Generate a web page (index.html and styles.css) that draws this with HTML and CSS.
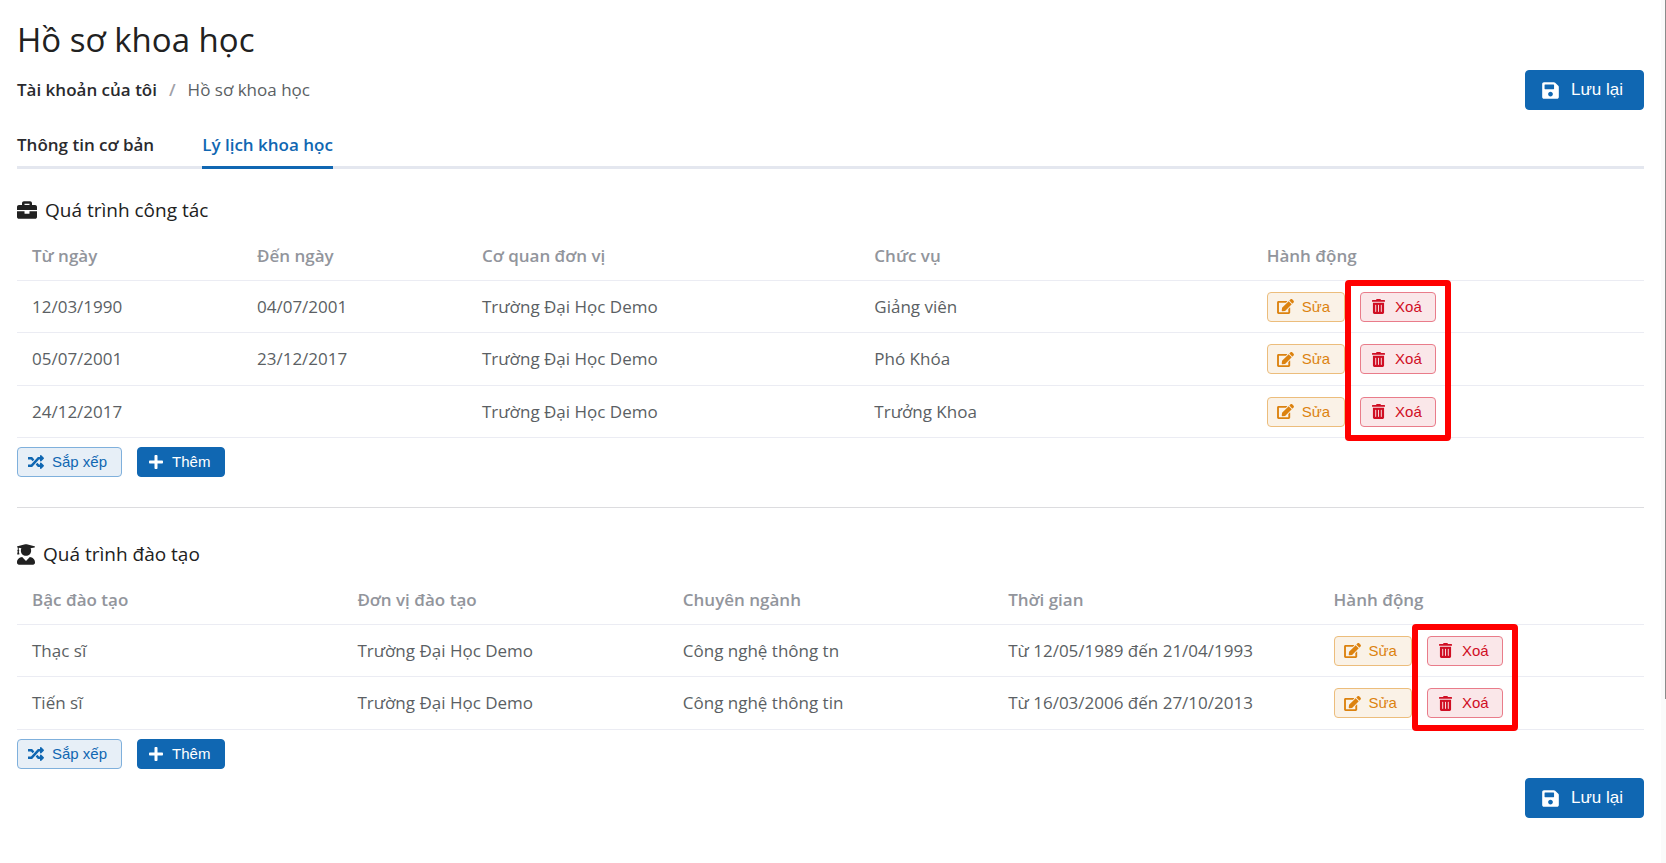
FILE: index.html
```html
<!DOCTYPE html>
<html lang="vi">
<head>
  <meta charset="UTF-8">
  <meta name="viewport" content="width=device-width, initial-scale=1">
  <title>Hồ sơ khoa học</title>
  <link rel="stylesheet" href="styles.css">
</head>
<body>

  <svg class="sprite" aria-hidden="true">
    <symbol id="i-save" viewBox="0 0 448 512"><path d="M433.941 129.941l-83.882-83.882A48 48 0 0 0 316.118 32H48C21.49 32 0 53.49 0 80v352c0 26.51 21.49 48 48 48h352c26.51 0 48-21.49 48-48V163.882a48 48 0 0 0-14.059-33.941zM224 416c-35.346 0-64-28.654-64-64 0-35.346 28.654-64 64-64s64 28.654 64 64c0 35.346-28.654 64-64 64zm96-304.52V212c0 6.627-5.373 12-12 12H76c-6.627 0-12-5.373-12-12V108c0-6.627 5.373-12 12-12h228.52c3.183 0 6.235 1.264 8.485 3.515l3.48 3.48A11.996 11.996 0 0 1 320 111.48z"/></symbol>
    <symbol id="i-edit" viewBox="0 0 576 512"><path d="M402.6 83.2l90.2 90.2c3.8 3.8 3.8 10 0 13.8L274.4 405.6l-92.8 10.3c-12.4 1.4-22.9-9.1-21.5-21.5l10.3-92.8L388.8 83.2c3.8-3.8 10-3.8 13.8 0zm162-22.9l-48.8-48.8c-15.2-15.2-39.9-15.2-55.2 0l-35.4 35.4c-3.8 3.8-3.8 10 0 13.8l90.2 90.2c3.8 3.8 10 3.8 13.8 0l35.4-35.4c15.2-15.3 15.2-40 0-55.2zM384 346.2V448H64V128h229.8c3.2 0 6.2-1.3 8.5-3.5l40-40c7.6-7.6 2.2-20.5-8.5-20.5H48C21.5 64 0 85.5 0 112v352c0 26.5 21.5 48 48 48h352c26.5 0 48-21.5 48-48V306.2c0-10.7-12.9-16-20.5-8.5l-40 40c-2.2 2.3-3.5 5.3-3.5 8.5z"/></symbol>
    <symbol id="i-trash" viewBox="0 0 448 512"><path d="M32 464a48 48 0 0 0 48 48h288a48 48 0 0 0 48-48V128H32zm272-256a16 16 0 0 1 32 0v224a16 16 0 0 1-32 0zm-96 0a16 16 0 0 1 32 0v224a16 16 0 0 1-32 0zm-96 0a16 16 0 0 1 32 0v224a16 16 0 0 1-32 0zM432 32H312l-9.4-18.7A24 24 0 0 0 281.1 0H166.8a23.72 23.72 0 0 0-21.4 13.3L136 32H16A16 16 0 0 0 0 48v32a16 16 0 0 0 16 16h416a16 16 0 0 0 16-16V48a16 16 0 0 0-16-16z"/></symbol>
    <symbol id="i-plus" viewBox="0 0 448 512"><path d="M416 208H272V64c0-17.67-14.33-32-32-32h-32c-17.67 0-32 14.33-32 32v144H32c-17.67 0-32 14.33-32 32v32c0 17.67 14.33 32 32 32h144v144c0 17.67 14.33 32 32 32h32c17.67 0 32-14.33 32-32V304h144c17.67 0 32-14.33 32-32v-32c0-17.67-14.33-32-32-32z"/></symbol>
    <symbol id="i-random" viewBox="0 0 512 512"><path d="M504.971 359.029c9.373 9.373 9.373 24.569 0 33.941l-80 79.984c-15.01 15.01-40.971 4.49-40.971-16.971V416h-58.785a12.004 12.004 0 0 1-8.773-3.812l-70.556-75.596 53.333-57.143L352 336h32v-39.981c0-21.438 25.943-31.998 40.971-16.971l80 79.981zM12 176h84l52.781 56.551 53.333-57.143-70.556-75.596A11.999 11.999 0 0 0 122.785 96H12c-6.627 0-12 5.373-12 12v56c0 6.627 5.373 12 12 12zm372 0v39.984c0 21.46 25.961 31.98 40.971 16.971l80-79.984c9.373-9.373 9.373-24.569 0-33.941l-80-79.981C409.943 24.021 384 34.582 384 56.019V96h-58.785a12.004 12.004 0 0 0-8.773 3.812L96 336H12c-6.627 0-12 5.373-12 12v56c0 6.627 5.373 12 12 12h110.785c3.326 0 6.503-1.381 8.773-3.812L352 176h32z"/></symbol>
    <symbol id="i-briefcase" viewBox="0 0 512 512"><path d="M320 336c0 8.84-7.16 16-16 16h-96c-8.84 0-16-7.16-16-16v-48H0v144c0 25.6 22.4 48 48 48h416c25.6 0 48-22.4 48-48V288H320v48zm144-208h-80V80c0-25.6-22.4-48-48-48H176c-25.6 0-48 22.4-48 48v48H48c-25.6 0-48 22.4-48 48v80h512v-80c0-25.6-22.4-48-48-48zm-144 0H192V96h128v32z"/></symbol>
    <symbol id="i-graduate" viewBox="0 0 448 512"><path d="M319.4 320.6L224 416l-95.4-95.4C57.1 323.7 0 382.2 0 454.4v9.6c0 26.5 21.5 48 48 48h352c26.5 0 48-21.5 48-48v-9.6c0-72.2-57.1-130.7-128.6-133.8zM13.6 79.8l6.4 1.5v58.4c-7 4.2-12 11.5-12 20.3 0 8.4 4.6 15.4 11.1 19.7L3.5 242c-1.7 6.9 2.1 14 7.6 14h41.8c5.5 0 9.3-7.1 7.6-14l-15.6-62.3C51.4 175.4 56 168.4 56 160c0-8.8-5-16.1-12-20.3V87.1l66 15.9c-8.6 17.2-14 36.4-14 57 0 70.7 57.3 128 128 128s128-57.3 128-128c0-20.6-5.3-39.8-14-57l96.3-23.2c18.2-4.4 18.2-27.1 0-31.5l-190.4-46c-13-3.1-26.7-3.1-39.7 0L13.6 48.2c-18.1 4.4-18.1 27.2 0 31.6z"/></symbol>
  </svg>

  <main class="page">
    <h1>Hồ sơ khoa học</h1>

    <div class="topbar">
      <nav class="breadcrumb">
        <a href="#">Tài khoản của tôi</a>
        <span class="sep">/</span>
        <span>Hồ sơ khoa học</span>
      </nav>
      <button type="button" class="btn btn-save"><svg class="icon-save"><use href="#i-save"/></svg>Lưu lại</button>
    </div>

    <nav class="tabs">
      <a href="#">Thông tin cơ bản</a>
      <a href="#" class="active">Lý lịch khoa học</a>
    </nav>

    <section>
      <h2><svg class="icon-briefcase"><use href="#i-briefcase"/></svg>Quá trình công tác</h2>
      <table class="work">
        <thead>
          <tr><th class="date">Từ ngày</th><th class="date">Đến ngày</th><th>Cơ quan đơn vị</th><th>Chức vụ</th><th>Hành động</th></tr>
        </thead>
        <tbody>
          <tr>
            <td>12/03/1990</td><td>04/07/2001</td><td>Trường Đại Học Demo</td><td>Giảng viên</td>
            <td>
              <div class="actions">
                <button type="button" class="btn btn-edit"><svg class="icon-edit"><use href="#i-edit"/></svg>Sửa</button>
                <div class="marked">
                  <button type="button" class="btn btn-delete"><svg class="icon-trash"><use href="#i-trash"/></svg>Xoá</button>
                  <div class="mark mark-3"></div>
                </div>
              </div>
            </td>
          </tr>
          <tr>
            <td>05/07/2001</td><td>23/12/2017</td><td>Trường Đại Học Demo</td><td>Phó Khóa</td>
            <td>
              <div class="actions">
                <button type="button" class="btn btn-edit"><svg class="icon-edit"><use href="#i-edit"/></svg>Sửa</button>
                <button type="button" class="btn btn-delete"><svg class="icon-trash"><use href="#i-trash"/></svg>Xoá</button>
              </div>
            </td>
          </tr>
          <tr>
            <td>24/12/2017</td><td></td><td>Trường Đại Học Demo</td><td>Trưởng Khoa</td>
            <td>
              <div class="actions">
                <button type="button" class="btn btn-edit"><svg class="icon-edit"><use href="#i-edit"/></svg>Sửa</button>
                <button type="button" class="btn btn-delete"><svg class="icon-trash"><use href="#i-trash"/></svg>Xoá</button>
              </div>
            </td>
          </tr>
        </tbody>
      </table>
      <div class="toolbar">
        <button type="button" class="btn btn-sort"><svg class="icon-random"><use href="#i-random"/></svg>Sắp xếp</button>
        <button type="button" class="btn btn-add"><svg class="icon-plus"><use href="#i-plus"/></svg>Thêm</button>
      </div>
    </section>

    <hr>

    <section>
      <h2><svg class="icon-graduate"><use href="#i-graduate"/></svg>Quá trình đào tạo</h2>
      <table>
        <thead>
          <tr><th>Bậc đào tạo</th><th>Đơn vị đào tạo</th><th>Chuyên ngành</th><th>Thời gian</th><th>Hành động</th></tr>
        </thead>
        <tbody>
          <tr>
            <td>Thạc sĩ</td><td>Trường Đại Học Demo</td><td>Công nghệ thông tn</td><td>Từ 12/05/1989 đến 21/04/1993</td>
            <td>
              <div class="actions">
                <button type="button" class="btn btn-edit"><svg class="icon-edit"><use href="#i-edit"/></svg>Sửa</button>
                <div class="marked">
                  <button type="button" class="btn btn-delete"><svg class="icon-trash"><use href="#i-trash"/></svg>Xoá</button>
                  <div class="mark mark-2"></div>
                </div>
              </div>
            </td>
          </tr>
          <tr>
            <td>Tiến sĩ</td><td>Trường Đại Học Demo</td><td>Công nghệ thông tin</td><td>Từ 16/03/2006 đến 27/10/2013</td>
            <td>
              <div class="actions">
                <button type="button" class="btn btn-edit"><svg class="icon-edit"><use href="#i-edit"/></svg>Sửa</button>
                <button type="button" class="btn btn-delete"><svg class="icon-trash"><use href="#i-trash"/></svg>Xoá</button>
              </div>
            </td>
          </tr>
        </tbody>
      </table>
      <div class="toolbar">
        <button type="button" class="btn btn-sort"><svg class="icon-random"><use href="#i-random"/></svg>Sắp xếp</button>
        <button type="button" class="btn btn-add"><svg class="icon-plus"><use href="#i-plus"/></svg>Thêm</button>
      </div>
    </section>

    <div class="bottom">
      <button type="button" class="btn btn-save"><svg class="icon-save"><use href="#i-save"/></svg>Lưu lại</button>
    </div>
  </main>

  <div class="scrollbar"><div class="thumb"></div></div>

</body>
</html>
```
FILE: styles.css
```css
* {
  box-sizing: border-box;
}

body {
  margin: 0;
  background: #fff;
  color: #5b5f64;
  font: 17px/24px 'Segoe UI', 'Open Sans', 'Noto Sans', sans-serif;
}

.sprite {
  display: none;
}

.page {
  padding: 16px 22px 16px 17px;
}

h1 {
  margin: 0 0 6px;
  color: #212121;
  font-size: 33px;
  line-height: 48px;
  font-weight: 400;
}

.topbar {
  display: flex;
  justify-content: space-between;
  align-items: center;
}

.breadcrumb {
  display: flex;
  gap: 12px;
}

.breadcrumb a {
  color: #2a2a2e;
  font-weight: 600;
  text-decoration: none;
}

.breadcrumb .sep {
  color: #a0a0a8;
  font-weight: 600;
}

.tabs {
  display: flex;
  gap: 48px;
  margin-top: 14px;
  border-bottom: 3px solid #e4e7ef;
}

.tabs a {
  margin-bottom: -3px;
  padding: 9px 0;
  border-bottom: 3px solid transparent;
  color: #2a2a2e;
  font-weight: 600;
  text-decoration: none;
}

.tabs .active {
  color: #1067b2;
  border-color: #1067b2;
}

h2 {
  display: flex;
  align-items: center;
  gap: 8px;
  margin: 25px 0 6px;
  color: #212121;
  font-size: 19px;
  line-height: 32px;
  font-weight: 400;
}

table {
  width: 100%;
  table-layout: fixed;
  border-collapse: separate;
  border-spacing: 0;
}

th, td {
  padding: 0 15px;
  border-bottom: 1px solid #ebecf3;
  text-align: left;
}

th {
  height: 49px;
  color: #92959c;
  font-weight: 600;
}

td {
  height: 52px;
}

tr:nth-child(even) td {
  height: 53px;
}

.date {
  width: 225px;
}

.actions, .toolbar {
  display: flex;
  gap: 15px;
}

.toolbar {
  margin-top: 9px;
}

.btn {
  display: inline-flex;
  align-items: center;
  height: 30px;
  border: 1px solid;
  border-radius: 4px;
  padding: 0 14px 0 9px;
  gap: 8px;
  font: 15px/20px 'Liberation Sans', Arial, sans-serif;
  cursor: pointer;
}

.btn svg, h2 svg {
  fill: currentColor;
  flex: none;
}

.btn-edit {
  background: #faf2e7;
  border-color: #ecbd7c;
  color: #dc820f;
}

.btn-delete {
  background: #fae7e9;
  border-color: #e97c8a;
  color: #d00e24;
  padding: 0 13px 0 11px;
  gap: 10px;
}

.btn-sort {
  background: #e7eff7;
  border-color: #7fb0dc;
  color: #1067b2;
  padding-left: 10px;
}

.btn-add {
  background: #1067b2;
  border-color: #1067b2;
  color: #fff;
  padding-left: 11px;
  gap: 9px;
}

.btn-save {
  height: 40px;
  background: #1067b2;
  border-color: #1067b2;
  color: #fff;
  padding: 0 20px 0 16px;
  gap: 12px;
  font-size: 17px;
}

.icon-save { width: 17px; height: 19px; }
.icon-edit { width: 17px; height: 15px; }
.icon-trash { width: 13px; height: 15px; }
.icon-random { width: 16px; height: 16px; }
.icon-plus { width: 14px; height: 16px; }
.icon-briefcase { width: 20px; height: 20px; }
.icon-graduate { width: 18px; height: 21px; }

/* red frame round the delete buttons */
.marked {
  position: relative;
  display: flex;
}

.mark {
  position: absolute;
  top: -12px;
  left: -15px;
  right: -15px;
  border: 6px solid #f00;
  border-radius: 4px;
  pointer-events: none;
}

.mark-3 { height: 161px; }
.mark-2 { height: 107px; }

hr {
  margin: 30px 0 0;
  border: 0;
  border-top: 1px solid #dcdcdf;
}

hr + section h2 {
  margin-top: 30px;
}

.bottom {
  display: flex;
  justify-content: flex-end;
  margin-top: 9px;
}

.scrollbar {
  position: fixed;
  top: 0;
  right: 0;
  bottom: 0;
  width: 5px;
  background: #fafafa;
}

.thumb {
  width: 1px;
  height: 81%;
  margin-left: auto;
  background: #8b8b8b;
}
```
